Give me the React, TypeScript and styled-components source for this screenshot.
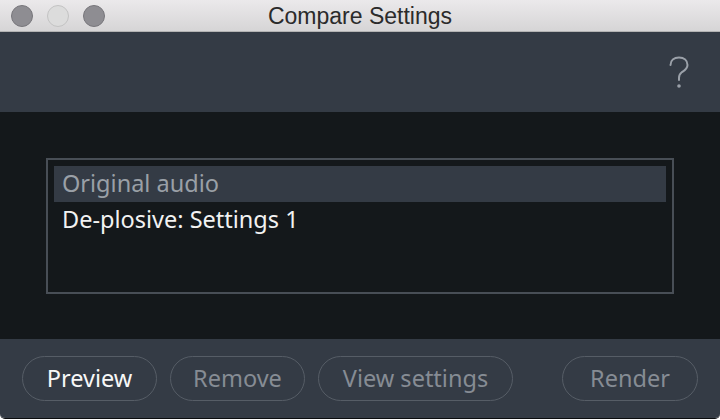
import React from "react";
import styled, { createGlobalStyle } from "styled-components";

const GlobalStyle = createGlobalStyle`
  html, body {
    margin: 0;
    padding: 0;
    background: #ffffff;
  }
  * {
    box-sizing: border-box;
  }
`;

const Window = styled.div`
  width: 720px;
  height: 419px;
  display: flex;
  flex-direction: column;
  overflow: hidden;
  border-radius: 0 0 5px 5px;
  border-bottom: 1px solid #0b0d0f;
  font-family: "Noto Sans", "Open Sans", sans-serif;
`;

const TitleBar = styled.div`
  height: 32px;
  flex: none;
  position: relative;
  display: flex;
  align-items: center;
  justify-content: center;
  background: linear-gradient(#ebe9eb, #d6d5d6);
  border-bottom: 1px solid #b3b3b3;
`;

const Lights = styled.div`
  position: absolute;
  left: 11px;
  top: 5px;
  display: flex;
  gap: 14px;
`;

const Light = styled.div<{ $dim?: boolean }>`
  width: 22px;
  height: 22px;
  border-radius: 50%;
  background: ${(p) => (p.$dim ? "#dcdcdc" : "#8e8d92")};
  border: 1px solid ${(p) => (p.$dim ? "#c3c3c3" : "#77767b")};
`;

const Title = styled.div`
  font-family: "Liberation Sans", Arial, sans-serif;
  font-size: 23px;
  color: #2b2b2b;
  margin-top: 1px;
`;

const Header = styled.div`
  height: 80px;
  flex: none;
  background: #343b45;
  display: flex;
  justify-content: flex-end;
  align-items: center;
  padding-right: 30px;
`;

const HelpIcon = styled.svg`
  width: 22px;
  height: 34px;
  margin-top: 2px;
`;

const Body = styled.div`
  flex: 1;
  background: #14181b;
  padding: 46px 46px 43px 46px;
`;

const ListBox = styled.div`
  height: 136px;
  border: 2px solid #484e56;
  padding: 6px;
  display: flex;
  flex-direction: column;
`;

const Item = styled.div<{ $selected?: boolean }>`
  height: 36px;
  flex: none;
  display: flex;
  align-items: center;
  padding-left: 8px;
  padding-bottom: 2px;
  font-size: 23.5px;
  background: ${(p) => (p.$selected ? "#343b45" : "transparent")};
  color: ${(p) => (p.$selected ? "#9aa0a7" : "#f2f2f2")};
`;

const Footer = styled.div`
  height: 79px;
  flex: none;
  background: #343b45;
  display: flex;
  align-items: center;
  padding: 0 22px;
  gap: 13px;
`;

const Button = styled.div<{ $w: number; $active?: boolean }>`
  width: ${(p) => p.$w}px;
  height: 45px;
  border-radius: 23px;
  border: 1.5px solid #565d66;
  display: flex;
  align-items: center;
  justify-content: center;
  padding-bottom: 2px;
  font-size: 23.5px;
  color: ${(p) => (p.$active ? "#f7f7f7" : "#868c94")};
`;

const Spacer = styled.div`
  flex: 1;
`;

export default function App() {
  return (
    <>
      <GlobalStyle />
      <Window>
        <TitleBar>
          <Lights>
            <Light />
            <Light $dim />
            <Light />
          </Lights>
          <Title>Compare Settings</Title>
        </TitleBar>
        <Header>
          <HelpIcon viewBox="0 0 22 34">
            <path
              d="M2.5 9 C2.5 4.5 6 1.5 11 1.5 C16 1.5 19.5 4.5 19.5 9 C19.5 13 16.5 14.5 13.5 16.5 C11.5 18 11 19.5 11 22 L11 24"
              fill="none"
              stroke="#9ba1a9"
              strokeWidth="2"
              strokeLinecap="round"
            />
            <circle cx="11" cy="30" r="1.8" fill="#9ba1a9" />
          </HelpIcon>
        </Header>
        <Body>
          <ListBox>
            <Item $selected>Original audio</Item>
            <Item>De-plosive: Settings 1</Item>
          </ListBox>
        </Body>
        <Footer>
          <Button $w={135} $active>
            Preview
          </Button>
          <Button $w={135}>Remove</Button>
          <Button $w={195}>View settings</Button>
          <Spacer />
          <Button $w={136}>Render</Button>
        </Footer>
      </Window>
    </>
  );
}
